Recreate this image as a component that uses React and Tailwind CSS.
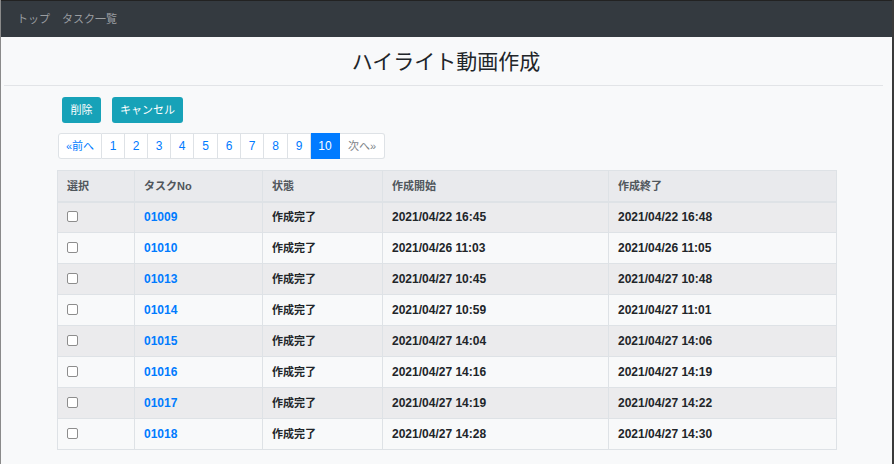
const rows = [
  { no: "01009", start: "2021/04/22 16:45", end: "2021/04/22 16:48" },
  { no: "01010", start: "2021/04/26 11:03", end: "2021/04/26 11:05" },
  { no: "01013", start: "2021/04/27 10:45", end: "2021/04/27 10:48" },
  { no: "01014", start: "2021/04/27 10:59", end: "2021/04/27 11:01" },
  { no: "01015", start: "2021/04/27 14:04", end: "2021/04/27 14:06" },
  { no: "01016", start: "2021/04/27 14:16", end: "2021/04/27 14:19" },
  { no: "01017", start: "2021/04/27 14:19", end: "2021/04/27 14:22" },
  { no: "01018", start: "2021/04/27 14:28", end: "2021/04/27 14:30" },
];

const pages = [
  { label: "«前へ", w: "w-[44px]" },
  { label: "1", w: "w-[23px]" },
  { label: "2", w: "w-[23px]" },
  { label: "3", w: "w-[23px]" },
  { label: "4", w: "w-[23px]" },
  { label: "5", w: "w-[24px]" },
  { label: "6", w: "w-[23px]" },
  { label: "7", w: "w-[23px]" },
  { label: "8", w: "w-[24px]" },
  { label: "9", w: "w-[23px]" },
  { label: "10", w: "w-[29px]", active: true },
  { label: "次へ»", w: "w-[45px]", disabled: true },
];

const App = () => {
  return (
    <div
      className="w-[894px] h-[464px] overflow-hidden bg-[#f8f9fa] border-l border-l-[#8a8a8a] border-r-2 border-r-[#3a3a3a] text-[12px] text-[#212529]"
      style={{ fontFamily: '"Liberation Sans", "Noto Sans CJK JP", sans-serif' }}
    >
      {/* navbar */}
      <div className="h-[37px] bg-[#343a40] border-t border-t-[#222] flex items-center gap-[12px] pl-[16px] pt-[1px] text-[11px] text-[#9a9da0]">
        <span>トップ</span>
        <span>タスク一覧</span>
      </div>

      {/* title */}
      <div className="ml-[3px] mr-[9px] h-[49px] border-b border-[#e2e4e7] flex items-center justify-center">
        <h1 className="text-[21px] text-[#212529] pt-[1px] pl-[5px]">ハイライト動画作成</h1>
      </div>

      <div className="pl-[56px]">
        {/* buttons */}
        <div className="flex gap-[11px] ml-[5px] mt-[11px] text-[11px]">
          <button className="w-[39px] h-[26px] rounded-[3px] bg-[#17a2b8] text-white">削除</button>
          <button className="w-[71px] h-[26px] rounded-[3px] bg-[#17a2b8] text-white">キャンセル</button>
        </div>

        {/* pagination */}
        <div className="flex mt-[10px] ml-[1px]">
          {pages.map((p, i) => (
            <div
              key={i}
              className={
                "h-[26px] flex items-center justify-center border-y border-r " +
                p.w +
                (i === 0 ? " border-l rounded-l-[3px] text-[11px]" : "") +
                (i === pages.length - 1 ? " rounded-r-[3px] text-[11px]" : "") +
                (p.active
                  ? " bg-[#007bff] border-[#007bff] text-white"
                  : p.disabled
                  ? " bg-white border-[#dee2e6] text-[#7d8388]"
                  : " bg-white border-[#dee2e6] text-[#007bff]")
              }
            >
              {p.label}
            </div>
          ))}
        </div>

        {/* table */}
        <table className="mt-[11px] w-[779px] border-collapse table-fixed">
          <thead>
            <tr className="h-[31px] bg-[#e9eaed] text-[#50565c] text-[11px]">
              <th className="w-[77px] border border-[#dee2e6] border-b-2 text-left font-bold px-[9px]">選択</th>
              <th className="w-[128px] border border-[#dee2e6] border-b-2 text-left font-bold px-[9px]">タスクNo</th>
              <th className="w-[120px] border border-[#dee2e6] border-b-2 text-left font-bold px-[9px]">状態</th>
              <th className="w-[226px] border border-[#dee2e6] border-b-2 text-left font-bold px-[9px]">作成開始</th>
              <th className="w-[228px] border border-[#dee2e6] border-b-2 text-left font-bold px-[9px]">作成終了</th>
            </tr>
          </thead>
          <tbody>
            {rows.map((r, i) => (
              <tr key={r.no} className={"h-[31px] font-bold " + (i % 2 === 0 ? "bg-[#ebebed]" : "bg-[#f8f9fa]")}>
                <td className="border border-[#dee2e6] px-[9px]">
                  <span className="block w-[11px] h-[11px] rounded-[2px] border border-[#8d8d8d] bg-white -mt-[2px]" />
                </td>
                <td className="border border-[#dee2e6] px-[9px] text-[#007bff]">{r.no}</td>
                <td className="border border-[#dee2e6] px-[9px] text-[11px]">作成完了</td>
                <td className="border border-[#dee2e6] px-[9px]">{r.start}</td>
                <td className="border border-[#dee2e6] px-[9px]">{r.end}</td>
              </tr>
            ))}
          </tbody>
        </table>
      </div>
    </div>
  );
};

export default App;
